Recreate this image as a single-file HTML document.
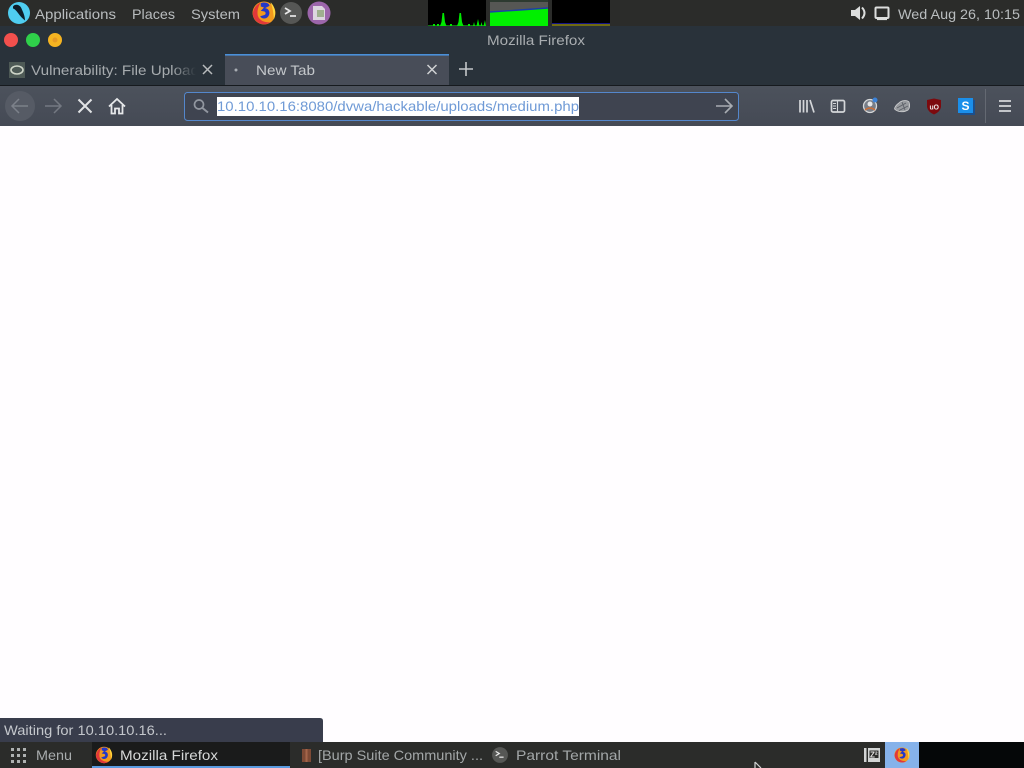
<!DOCTYPE html>
<html>
<head>
<meta charset="utf-8">
<title>Mozilla Firefox</title>
<style>
html,body{margin:0;padding:0;width:1024px;height:768px;overflow:hidden;background:#fffdff}
svg{display:block;position:absolute;left:0;top:0}
text{font-family:"Liberation Sans","DejaVu Sans",sans-serif;font-size:14px}
</style>
</head>
<body>
<svg width="1024" height="768" viewBox="0 0 1024 768" xmlns="http://www.w3.org/2000/svg">
<defs>
<g id="ff">
  <circle cx="0" cy="0" r="10.500" fill="#f39a1e"/>
  <path d="M-10.300,1 A10.500,10.500 0 0 0 6,8.600 C1,9 -4,7 -5.500,3 C-6.500,0 -6,-5 -3,-9.500 C-7,-8 -10,-4 -10.300,1Z" fill="#e2383a"/>
  <path d="M6,-10 C10,-6 11.500,0 9,6 C9,1 8,-5 6,-10Z" fill="#ffd93f"/>
  <path d="M-3,-9 C1,-10.500 5,-9 5,-6.500 L1,-4.500 C5,-4 6,0 4,3 C2,6 -2.500,5.500 -3.500,3 L0,2 C2,1.500 2,-1 0,-1.500 L-3,-2 L0,-5 L-3,-6Z" fill="#2438c8"/>
</g>
<g id="term">
  <circle cx="0" cy="0" r="11" fill="#565755"/>
  <path d="M-6,-5 L-1,-2 L-6,1" fill="none" stroke="#e8e8e8" stroke-width="1.700"/>
  <path d="M-1,3 H5" stroke="#e8e8e8" stroke-width="1.700"/>
</g>
<linearGradient id="tb" x1="0" y1="0" x2="0" y2="1"><stop offset="0" stop-color="#4c525c"/><stop offset="1" stop-color="#454a55"/></linearGradient>
<linearGradient id="fade" x1="0" y1="0" x2="1" y2="0"><stop offset="0" stop-color="#29323a" stop-opacity="0"/><stop offset="1" stop-color="#29323a"/></linearGradient>
</defs>

<!-- page -->
<rect x="0" y="0" width="1024" height="768" fill="#fffdff"/>

<!-- top panel -->
<rect x="0" y="0" width="1024" height="26" fill="#2b2c2a"/>
<circle cx="19" cy="13" r="11" fill="#4fcdf0"/>
<path d="M13,6.500 C15,3.500 20,4.500 21.500,8.500 C23,12 25,16 25,20.500 C22.500,18.500 20,16 18,13 C16.500,11 15,9 13,8.500Z" fill="#0e1d28"/>
<text x="35" y="19" fill="#b9bdbf" textLength="81" lengthAdjust="spacingAndGlyphs">Applications</text>
<text x="132" y="19" fill="#b9bdbf" textLength="43" lengthAdjust="spacingAndGlyphs">Places</text>
<text x="191" y="19" fill="#b9bdbf" textLength="49" lengthAdjust="spacingAndGlyphs">System</text>
<use href="#ff" transform="translate(264 13) scale(1.090)"/>
<use href="#term" x="291" y="13"/>
<circle cx="319" cy="13" r="11.500" fill="#9c66ab"/>
<path d="M313,6 H322 L325,9 V20 H313Z" fill="#ddd6e0"/>
<rect x="317" y="10" width="7" height="7" fill="#9fb08f"/>

<!-- graphs -->
<rect x="428" y="0" width="58" height="26" fill="#000"/>
<rect x="428" y="25" width="58" height="1" fill="#0c7a0c"/>
<path d="M433,26 V24 H435 V26Z M437,26 V24 H439 V26Z M440,26 L441.500,22 L442.500,13 L444,13 L445,22 L446.500,26Z M450,26 V24 H452 V26Z M457,26 L458.500,22 L459.500,13 L461,13 L462,22 L463.500,26Z M468,26 V24 H470 V26Z M473,26 L474,22 L475,26Z M476.500,26 L478,19 L479.500,26Z M480.500,26 L481.500,22 L482.500,26Z M483.500,26 L485,20 L486,26Z" fill="#00e800"/>
<rect x="490" y="0" width="58" height="26" fill="#565754"/>
<rect x="490" y="0" width="58" height="2" fill="#2d3a30"/>
<path d="M490,12 L520,10 L548,8 V26 H490Z" fill="#00f000"/>
<path d="M490,12 L520,10 L548,8" stroke="#1b3fa8" stroke-width="1.400" fill="none"/>
<rect x="552" y="0" width="58" height="26" fill="#000"/>
<rect x="552" y="24" width="58" height="2" fill="#6f6a12"/>
<rect x="552" y="23" width="58" height="1" fill="#14148a"/>

<!-- tray -->
<path d="M851,10 H855 L860,6 V20 L855,16 H851Z" fill="#dcdedd"/>
<path d="M862,7.500 Q867,13 862,18.500" stroke="#dcdedd" stroke-width="2" fill="none"/>
<rect x="875.500" y="7.500" width="13" height="10.500" rx="1" fill="none" stroke="#dcdedd" stroke-width="2"/>
<path d="M877,19.500 H887" stroke="#dcdedd" stroke-width="1.200"/>
<text x="898" y="19" fill="#b9bdbf" textLength="122" lengthAdjust="spacingAndGlyphs">Wed Aug 26, 10:15</text>

<!-- title bar -->
<rect x="0" y="26" width="1024" height="59" fill="#29323a"/>
<circle cx="11" cy="40" r="7" fill="#f2504d"/>
<circle cx="33" cy="40" r="7" fill="#2fd04a"/>
<circle cx="55" cy="40" r="7" fill="#f5b421"/>
<circle cx="55" cy="40" r="2.500" fill="#e69a24"/>
<text x="487" y="45" fill="#a9adb0" textLength="98" lengthAdjust="spacingAndGlyphs">Mozilla Firefox</text>

<!-- tabs -->
<rect x="9" y="62" width="16" height="16" fill="#4e5a56"/>
<ellipse cx="17" cy="70" rx="6" ry="4" fill="none" stroke="#cfd6c9" stroke-width="1.600"/>
<text x="31" y="75" fill="#a6abae" textLength="168" lengthAdjust="spacingAndGlyphs">Vulnerability: File Upload</text>
<rect x="172" y="58" width="24" height="24" fill="url(#fade)"/>
<rect x="196" y="58" width="5" height="24" fill="#29323a"/>
<path d="M203,65 L212,74 M212,65 L203,74" stroke="#b8bbbd" stroke-width="1.500"/>
<rect x="225" y="54" width="224" height="31" fill="#484d58"/>
<rect x="225" y="54" width="224" height="1.600" fill="#4a90d9"/>
<circle cx="236" cy="70" r="1.500" fill="#a9adb3"/>
<text x="256" y="75" fill="#c4c7cb" textLength="59" lengthAdjust="spacingAndGlyphs">New Tab</text>
<path d="M427.500,65 L436.500,74 M436.500,65 L427.500,74" stroke="#d0d2d4" stroke-width="1.500"/>
<path d="M466,62 V76 M459,69 H473" stroke="#c4c7c9" stroke-width="1.600"/>

<!-- toolbar -->
<rect x="0" y="85" width="1024" height="1" fill="#161a1e"/>
<rect x="0" y="86" width="1024" height="40" fill="url(#tb)"/>
<circle cx="20" cy="106" r="15" fill="#565b65"/>
<path d="M28,106 H12 M19,99 L12,106 L19,113" fill="none" stroke="#7c818a" stroke-width="1.500"/>
<path d="M45,106 H61 M54,99 L61,106 L54,113" fill="none" stroke="#747982" stroke-width="1.500"/>
<path d="M78.500,99.500 L91.500,112.500 M91.500,99.500 L78.500,112.500" stroke="#e2e4e6" stroke-width="2"/>
<path d="M109,106.500 L117,99 L125,106.500 M111.500,105 V113.500 H115 V108.500 H119 V113.500 H122.500 V105" fill="none" stroke="#e6e8ea" stroke-width="1.800"/>

<!-- url bar -->
<rect x="184.500" y="92.500" width="554" height="28" rx="3" fill="#3f4450" stroke="#5487cc"/>
<circle cx="199" cy="104.500" r="4.500" fill="none" stroke="#9297a0" stroke-width="1.700"/>
<path d="M202.500,108 L208,112.500" stroke="#9297a0" stroke-width="1.900"/>
<rect x="217" y="97" width="362" height="19" fill="#ffffff"/>
<text x="217" y="111" fill="#6f9ad6" textLength="362" lengthAdjust="spacingAndGlyphs">10.10.10.16:8080/dvwa/hackable/uploads/medium.php</text>
<path d="M716,106 H732 M725,99 L732,106 L725,113" fill="none" stroke="#a8acb2" stroke-width="1.600"/>

<!-- toolbar right icons -->
<path d="M800,100 V112.500 M803.500,100 V112.500 M807,100 V112.500 M810,100 L814,112.500" stroke="#d4d6d9" stroke-width="1.700" fill="none"/>
<rect x="831.500" y="100.500" width="13" height="11.500" rx="1.500" fill="none" stroke="#d4d6d9" stroke-width="1.700"/>
<path d="M837.500,100.500 V112 M833,103.500 H836 M833,106 H836 M833,108.500 H836" stroke="#d4d6d9" stroke-width="1.100"/>
<circle cx="870" cy="106" r="6.500" fill="#787e88" stroke="#d6d8da" stroke-width="1.300"/>
<circle cx="870" cy="104" r="2.500" fill="#e5e6e8"/>
<path d="M865,110 Q870,106 875,110" stroke="#c96f3a" stroke-width="1.500" fill="none"/>
<circle cx="875" cy="100" r="2.500" fill="#3b82d8"/>
<path d="M894.500,109 C895,105 898,104 900,102 C903,100 907,100 909,102 C910,105 910,108 908,110 C904,112.500 898,112.500 894.500,109Z" fill="#989b9f" stroke="#cfd0d2" stroke-width=".8"/>
<path d="M897,108 L906,103 M899,110.500 L908,106 M902,102 L905,110" stroke="#5c6068" stroke-width=".9"/>
<path d="M927,100 L934,98.500 L941,100 V107 Q940,112 934,114.500 Q928,112 927,107Z" fill="#7c0a0e"/>
<text x="929.500" y="109.500" fill="#f0e8e8" style="font-size:7.500px;font-weight:700" textLength="9.500" lengthAdjust="spacingAndGlyphs">uO</text>
<rect x="960" y="100" width="15" height="15" fill="#1c4f8c"/>
<rect x="958" y="98" width="15" height="15" fill="#1b8fea"/>
<text x="961.500" y="110" fill="#ffffff" style="font-size:12px;font-weight:700">S</text>
<rect x="985" y="89" width="1" height="34" fill="#646972"/>
<path d="M999,101 H1011 M999,106 H1011 M999,111 H1011" stroke="#d4d6d9" stroke-width="1.700"/>

<!-- status -->
<path d="M0,718 H320 Q323,718 323,721 V742 H0Z" fill="#393d4c"/>
<text x="4" y="735" fill="#c4c7cc" textLength="163" lengthAdjust="spacingAndGlyphs">Waiting for 10.10.10.16...</text>

<!-- bottom panel -->
<rect x="0" y="742" width="1024" height="26" fill="#2b2c2a"/>
<g fill="#aeb1b1">
<rect x="11" y="748" width="3" height="3"/><rect x="17" y="748" width="3" height="3"/><rect x="23" y="748" width="3" height="3"/>
<rect x="11" y="754" width="3" height="3"/><rect x="17" y="754" width="3" height="3"/><rect x="23" y="754" width="3" height="3"/>
<rect x="11" y="760" width="3" height="3"/><rect x="17" y="760" width="3" height="3"/><rect x="23" y="760" width="3" height="3"/>
</g>
<text x="36" y="760" fill="#a8acad" textLength="36" lengthAdjust="spacingAndGlyphs">Menu</text>
<rect x="92" y="742" width="198" height="24" fill="#1a1b1b"/>
<rect x="92" y="766" width="198" height="2" fill="#5a9be0"/>
<use href="#ff" transform="translate(104 755) scale(.78)"/>
<text x="120" y="760" fill="#d6d8d8" textLength="98" lengthAdjust="spacingAndGlyphs">Mozilla Firefox</text>
<rect x="302" y="749" width="9" height="13" fill="#7e4a35"/>
<path d="M306.500,749 V762" stroke="#a5654a" stroke-width="2"/>
<text x="318" y="760" fill="#a3a7a8" textLength="165" lengthAdjust="spacingAndGlyphs">[Burp Suite Community ...</text>
<g transform="translate(500 755) scale(.72)"><use href="#term"/></g>
<text x="516" y="760" fill="#a3a7a8" textLength="105" lengthAdjust="spacingAndGlyphs">Parrot Terminal</text>

<!-- cursor -->
<path d="M755,762 L755,768 M755,762 L761,768" stroke="#d0d2d2" stroke-width="1.200" fill="none"/>

<!-- tray bottom -->
<rect x="864" y="748" width="2.500" height="14" fill="#d2d4d4"/>
<rect x="868" y="748" width="12" height="14" fill="#d2d4d4"/>
<rect x="869.500" y="750.500" width="9" height="7.500" fill="#2b2c2a"/>
<text x="870" y="757.500" fill="#e4e4e4" style="font-size:8px;font-weight:700">Z²</text>
<rect x="885" y="742" width="34" height="26" fill="#86b2ea"/>
<use href="#ff" transform="translate(902 755) scale(.72)"/>
<rect x="919" y="742" width="105" height="26" fill="#050708"/>
</svg>
</body>
</html>
